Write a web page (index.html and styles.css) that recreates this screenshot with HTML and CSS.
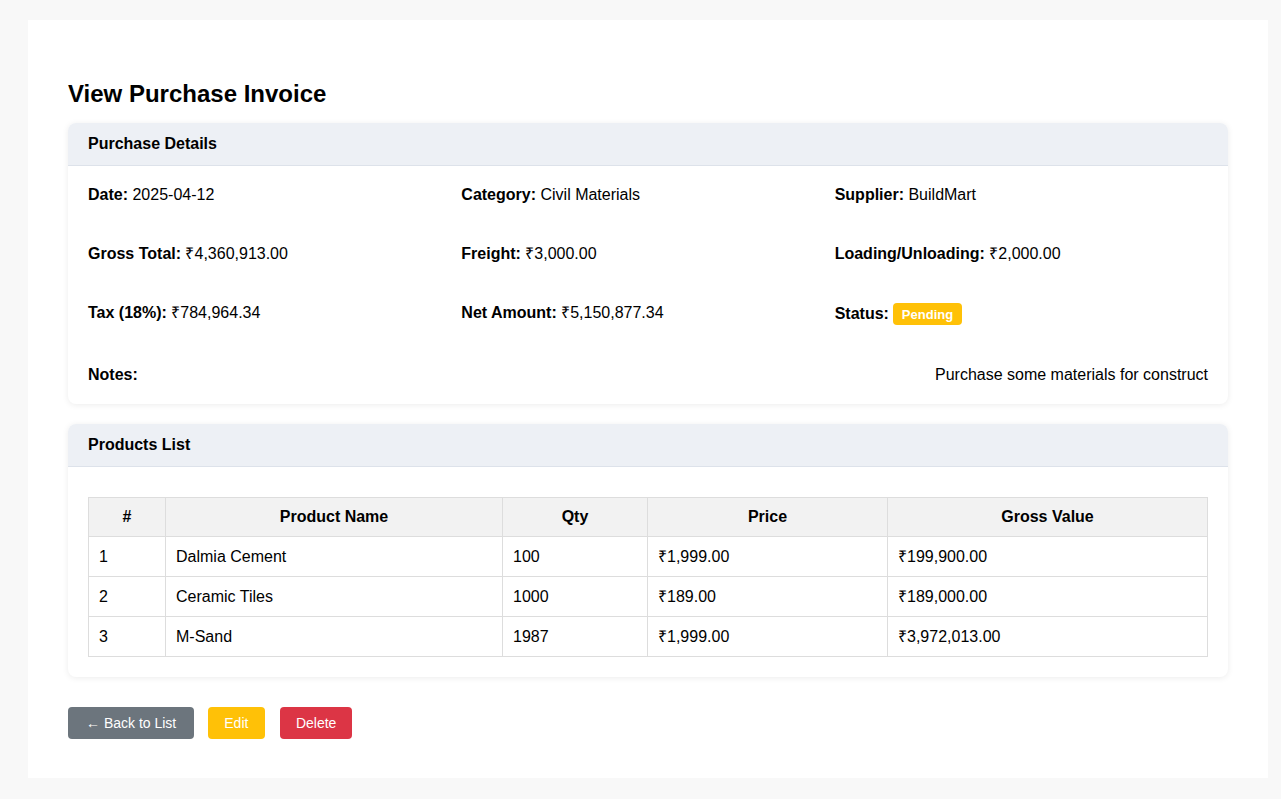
FILE: index.html
```html
<!DOCTYPE html>
<html lang="en">
<head>
<meta charset="utf-8">
<title>View Purchase Invoice</title>
<link rel="stylesheet" href="styles.css">
</head>
<body>
<div class="page">
  <h2 class="title">View Purchase Invoice</h2>

  <div class="card">
    <div class="card-header">Purchase Details</div>
    <div class="card-body details">
      <div class="grid">
        <div class="item"><strong>Date:</strong> 2025-04-12</div>
        <div class="item"><strong>Category:</strong> Civil Materials</div>
        <div class="item"><strong>Supplier:</strong> BuildMart</div>
        <div class="item"><strong>Gross Total:</strong> ₹4,360,913.00</div>
        <div class="item"><strong>Freight:</strong> ₹3,000.00</div>
        <div class="item"><strong>Loading/Unloading:</strong> ₹2,000.00</div>
        <div class="item"><strong>Tax (18%):</strong> ₹784,964.34</div>
        <div class="item"><strong>Net Amount:</strong> ₹5,150,877.34</div>
        <div class="item"><strong>Status:</strong> <span class="badge">Pending</span></div>
      </div>
      <div class="notes">
        <strong>Notes:</strong>
        <span>Purchase some materials for construct</span>
      </div>
    </div>
  </div>

  <div class="card">
    <div class="card-header">Products List</div>
    <div class="card-body">
      <table class="table">
        <colgroup>
          <col class="c1"><col class="c2"><col class="c3"><col class="c4"><col class="c5">
        </colgroup>
        <thead>
          <tr><th>#</th><th>Product Name</th><th>Qty</th><th>Price</th><th>Gross Value</th></tr>
        </thead>
        <tbody>
          <tr><td>1</td><td>Dalmia Cement</td><td>100</td><td>₹1,999.00</td><td>₹199,900.00</td></tr>
          <tr><td>2</td><td>Ceramic Tiles</td><td>1000</td><td>₹189.00</td><td>₹189,000.00</td></tr>
          <tr><td>3</td><td>M-Sand</td><td>1987</td><td>₹1,999.00</td><td>₹3,972,013.00</td></tr>
        </tbody>
      </table>
    </div>
  </div>

  <div class="actions">
    <a class="btn btn-secondary" href="#">← Back to List</a>
    <a class="btn btn-warning" href="#">Edit</a>
    <a class="btn btn-danger" href="#">Delete</a>
  </div>
</div>
</body>
</html>
```

FILE: styles.css
```css
html, body {
  margin: 0;
  padding: 0;
}
body {
  background: #f8f8f8;
  font-family: "Liberation Sans", Arial, sans-serif;
  font-size: 16px;
  color: #000;
  padding: 20px 13px 21px 28px;
}
.page {
  background: #fff;
  padding: 40px 40px 39px;
  width: 1160px;
}
.title {
  font-size: 24px;
  font-weight: bold;
  margin: 20px 0 15px;
  line-height: 28px;
}
.card {
  background: #fff;
  border-radius: 8px;
  box-shadow: 0 1px 6px rgba(0, 0, 0, 0.08);
  margin-bottom: 20px;
  overflow: hidden;
}
.card-header {
  background: #edf0f5;
  border-bottom: 1px solid #dde2ea;
  padding: 0 20px;
  height: 42px;
  line-height: 41px;
  font-weight: bold;
  font-size: 16px;
}
.card-body {
  padding: 19px 20px 20px;
}
.grid {
  display: grid;
  grid-template-columns: repeat(3, 1fr);
  row-gap: 40px;
  line-height: 19px;
}
.notes {
  margin-top: 40px;
  display: flex;
  justify-content: space-between;
  line-height: 19px;
}
.badge {
  display: inline-block;
  background: #ffc107;
  color: #fff;
  font-weight: bold;
  font-size: 13px;
  line-height: 15px;
  padding: 3.5px 8.5px;
  border-radius: 4px;
  vertical-align: baseline;
}
.table {
  width: 100%;
  border-collapse: collapse;
  margin-top: 11px;
}
.table th, .table td {
  border: 1px solid #dddddd;
  padding: 10px;
  line-height: 19px;
  text-align: left;
  font-size: 16px;
}
.table th {
  background: #f2f2f2;
  text-align: center;
  font-weight: bold;
  line-height: 18px;
}
.c1 { width: 77px; }
.c2 { width: 337px; }
.c3 { width: 145px; }
.c4 { width: 240px; }
.c5 { width: 320px; }
.actions {
  display: flex;
  gap: 14px;
  margin-top: 30px;
}
.btn {
  display: inline-block;
  color: #fff;
  text-decoration: none;
  font-size: 14px;
  line-height: 16px;
  padding: 8px 16px;
  border-radius: 4px;
}
.btn-secondary { background: #6c757d; padding: 8px 17.5px 8px 18px; }
.btn-warning { background: #ffc107; padding: 8px 16.5px; }
.btn-danger { background: #dc3545; margin-left: 1px; }
```
